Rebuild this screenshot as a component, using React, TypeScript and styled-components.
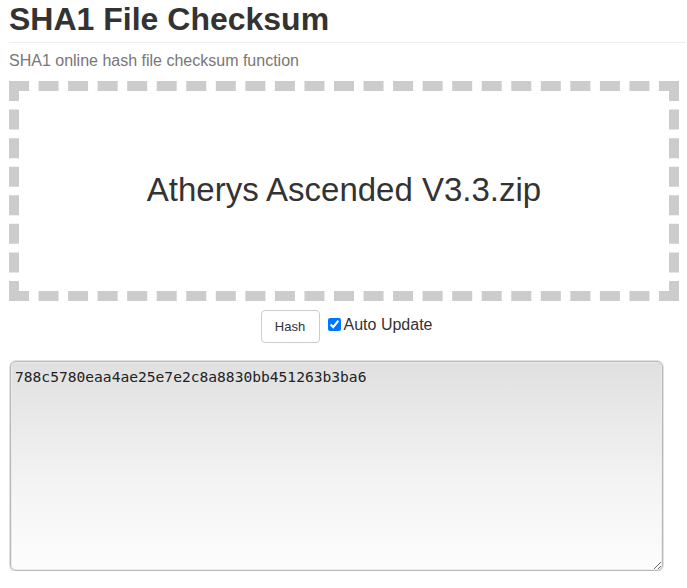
import React, { useState } from "react";
import styled, { createGlobalStyle } from "styled-components";

const Global = createGlobalStyle`
  html, body { margin: 0; padding: 0; background: #fff; }
  body { font-family: "Liberation Sans", Arial, sans-serif; color: #333; }
`;

const Page = styled.div`
  padding: 0 8px 0 9px;
`;

const Title = styled.h1`
  margin: 2px -7px 0 0;
  padding: 0 0 5px 0;
  font-size: 32px;
  line-height: 35px;
  font-weight: bold;
  color: #333;
  border-bottom: 1px solid #eee;
`;

const Subtitle = styled.p`
  margin: 8px 0 10px 0;
  font-size: 16px;
  line-height: 20px;
  color: #777;
`;

const DropZone = styled.div`
  box-sizing: border-box;
  height: 220px;
  border: 10px dashed #ccc;
  display: flex;
  align-items: center;
  justify-content: center;
  font-size: 33px;
  color: #333;
  padding-bottom: 2px;
`;

const Controls = styled.div`
  display: flex;
  justify-content: center;
  align-items: flex-start;
  gap: 8px;
  margin-top: 9px;
  margin-left: 5px;
`;

const HashButton = styled.button`
  box-sizing: border-box;
  width: 59px;
  height: 33px;
  background: #fff;
  border: 1px solid #ccc;
  border-radius: 4px;
  font-family: "Liberation Sans", Arial, sans-serif;
  font-size: 13px;
  color: #333;
  padding: 0;
`;

const CheckLabel = styled.label`
  display: flex;
  align-items: flex-start;
  font-size: 16px;
  line-height: 18px;
  color: #333;
  margin-top: 6px;
`;

const Check = styled.input`
  width: 13px;
  height: 13px;
  margin: 2px 3px 0 0;
  accent-color: #0075ff;
`;

const Output = styled.textarea`
  display: block;
  box-sizing: border-box;
  margin: 18px 0 0 1px;
  width: 653px;
  height: 210px;
  padding: 6px 4px;
  border: 1px solid #b8b8b8;
  border-radius: 6px;
  box-shadow: 0 0 0 1px #e2e2e2, inset 0 0 0 1px #ececec;
  background: linear-gradient(to bottom, #e0e0e0 0%, #f4f4f4 60%, #fdfdfd 100%);
  font-family: "DejaVu Sans Mono", "Liberation Mono", monospace;
  font-size: 14.6px;
  line-height: 17px;
  color: #222;
  outline: none;
`;

export default function App() {
  const [auto, setAuto] = useState(true);
  return (
    <Page>
      <Global />
      <Title>SHA1 File Checksum</Title>
      <Subtitle>SHA1 online hash file checksum function</Subtitle>
      <DropZone>Atherys Ascended V3.3.zip</DropZone>
      <Controls>
        <HashButton>Hash</HashButton>
        <CheckLabel>
          <Check type="checkbox" checked={auto} onChange={() => setAuto(!auto)} />
          Auto Update
        </CheckLabel>
      </Controls>
      <Output readOnly value="788c5780eaa4ae25e7e2c8a8830bb451263b3ba6" />
    </Page>
  );
}
